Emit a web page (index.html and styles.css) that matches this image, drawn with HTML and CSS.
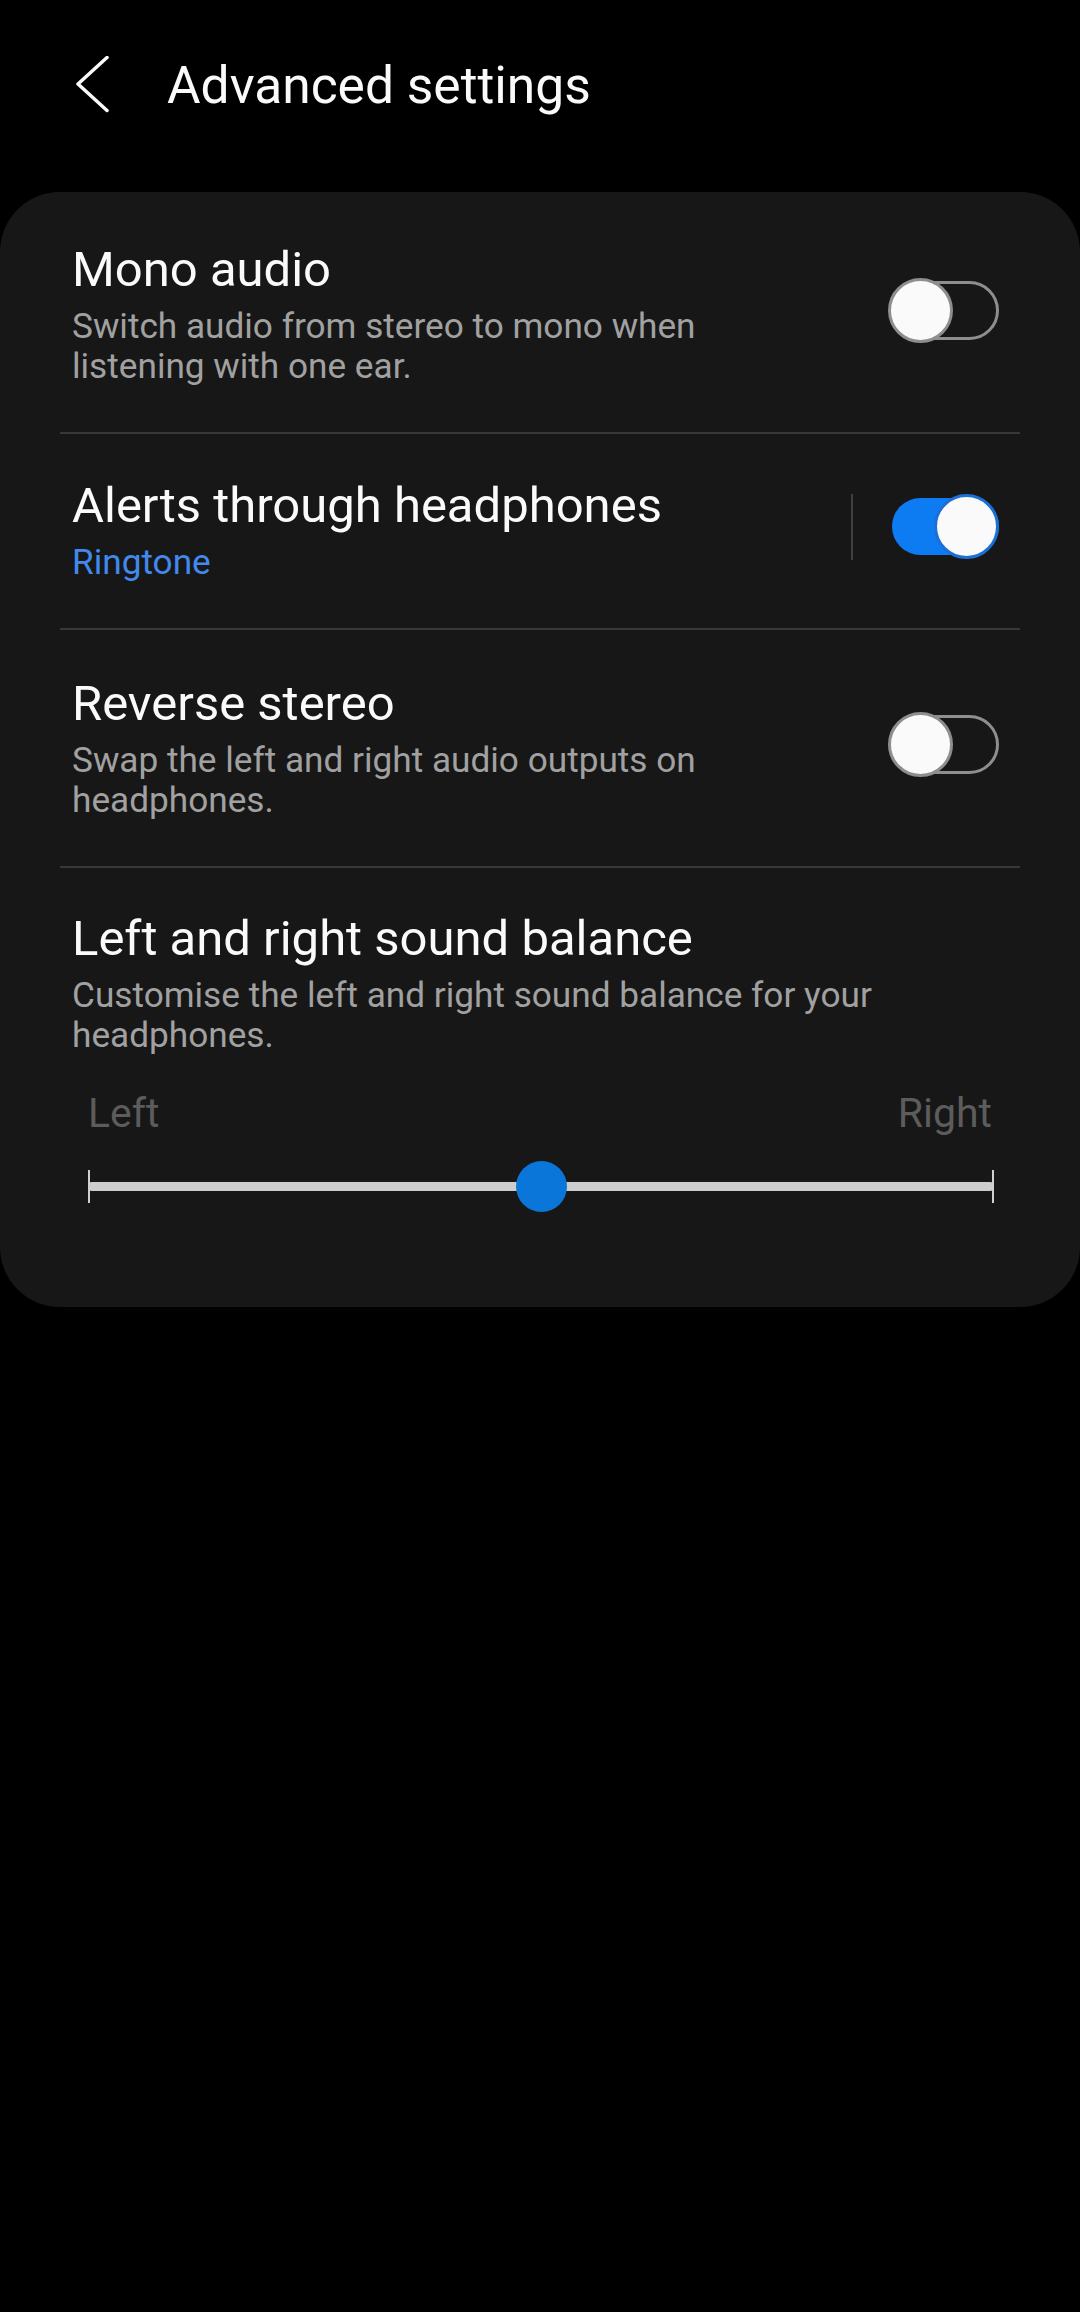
FILE: index.html
```html
<!DOCTYPE html>
<html lang="en">
<head>
  <meta charset="UTF-8">
  <title>Advanced settings</title>
  <link rel="stylesheet" href="styles.css">
</head>
<body>
  <header class="app-bar">
    <svg class="back" viewBox="0 0 36 60" width="36" height="60"><polyline points="32,1.5 3,28 32,54.5"/></svg>
    <h1 class="app-title">Advanced settings</h1>
  </header>

  <main class="card">
    <div class="row">
      <div class="row-text">
        <div class="row-title">Mono audio</div>
        <div class="row-sub">Switch audio from stereo to mono when listening with one ear.</div>
      </div>
      <div class="row-aside">
        <div class="switch"><span class="track"></span><span class="knob"></span></div>
      </div>
    </div>

    <div class="row row-short">
      <div class="row-text">
        <div class="row-title">Alerts through headphones</div>
        <div class="row-sub row-link">Ringtone</div>
      </div>
      <div class="row-aside">
        <span class="sep"></span>
        <div class="switch on"><span class="track"></span><span class="knob"></span></div>
      </div>
    </div>

    <div class="row">
      <div class="row-text">
        <div class="row-title">Reverse stereo</div>
        <div class="row-sub">Swap the left and right audio outputs on headphones.</div>
      </div>
      <div class="row-aside">
        <div class="switch"><span class="track"></span><span class="knob"></span></div>
      </div>
    </div>

    <div class="balance">
      <div class="row-title">Left and right sound balance</div>
      <div class="row-sub">Customise the left and right sound balance for your headphones.</div>
      <div class="slider-labels"><span>Left</span><span>Right</span></div>
      <div class="slider">
        <span class="tick"></span>
        <span class="slider-line"></span>
        <span class="tick"></span>
        <span class="thumb"></span>
      </div>
    </div>
  </main>
</body>
</html>
```

FILE: styles.css
```css
body {
  margin: 0;
  background: #000;
  color: #fafafa;
  font-family: Roboto, "Noto Sans", sans-serif;
}

.app-bar {
  height: 192px;
  box-sizing: border-box;
  padding: 56px 0 0 75px;
  display: flex;
  align-items: flex-start;
}

.back {
  flex: none;
  fill: none;
  stroke: #fafafa;
  stroke-width: 3.5;
  stroke-linecap: round;
  stroke-linejoin: round;
}

.app-title {
  margin: 0 0 0 56px;
  font-size: 51.5px;
  font-weight: 400;
  line-height: 60px;
}

.card {
  background: #171717;
  border-radius: 60px;
  padding: 4px 60px 0;
}

.row {
  display: flex;
  align-items: center;
  padding: 46px 21px 46px 12px;
  border-bottom: 2px solid #383838;
}

.row-short {
  padding-top: 44px;
}

.row-text {
  flex: 1;
  min-width: 0;
  padding-right: 100px;
}

.row-title {
  font-size: 49px;
  line-height: 56px;
}

.row-sub {
  margin-top: 8px;
  font-size: 35.2px;
  line-height: 40px;
  color: #a1a1a1;
}

.row-link {
  color: #4189eb;
}

.row-aside {
  flex: none;
  display: flex;
  align-items: center;
  gap: 35px;
  margin-bottom: 7px;
}

.sep {
  width: 2px;
  height: 66px;
  background: #404040;
}

.switch {
  position: relative;
  width: 111px;
  height: 65px;
}

.track {
  position: absolute;
  left: 4px;
  right: 0;
  top: 3px;
  bottom: 3px;
  box-sizing: border-box;
  border: 3px solid #8e8e8e;
  border-radius: 30px;
}

.knob {
  position: absolute;
  top: 0;
  left: 0;
  width: 65px;
  height: 65px;
  box-sizing: border-box;
  border-radius: 50%;
  background: #fafafa;
  border: 3px solid #8e8e8e;
}

.switch.on .track {
  top: 4px;
  bottom: 4px;
  border: none;
  background: #0d7cf2;
}

.switch.on .knob {
  left: auto;
  right: 0;
  border-color: #1b6fd6;
}

.balance {
  padding: 43px 21px 91px 12px;
}

.slider-labels {
  display: flex;
  justify-content: space-between;
  margin: 34px 7px 0 16px;
  font-size: 41px;
  line-height: 48px;
  color: #5c5c5c;
}

.slider {
  position: relative;
  height: 60px;
  margin: 19px 5px 0 16px;
  display: flex;
  align-items: center;
  justify-content: space-between;
}

.tick {
  position: relative;
  z-index: 1;
  width: 2px;
  height: 33px;
  background: #d0d0d0;
}

.slider-line {
  position: absolute;
  left: 0;
  right: 0;
  top: 26px;
  height: 9px;
  border-radius: 4px;
  background: #cdcdcd;
}

.thumb {
  position: absolute;
  left: 50%;
  top: 5px;
  width: 51px;
  height: 51px;
  margin-left: -25px;
  border-radius: 50%;
  background: #0a76d9;
}
```
